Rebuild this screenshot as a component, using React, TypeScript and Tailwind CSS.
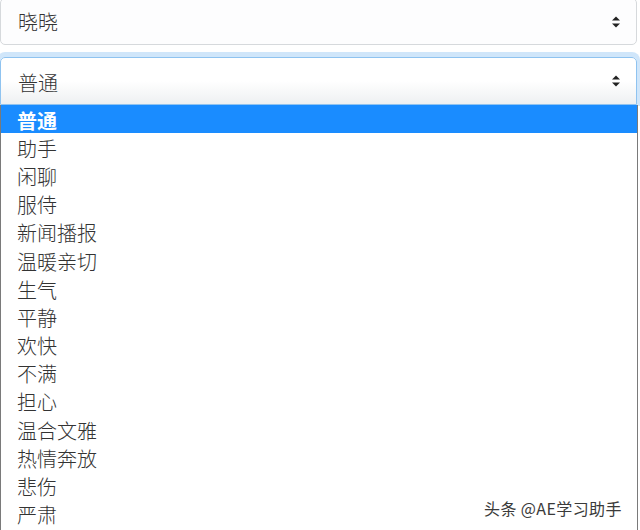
import React from 'react';

const options = [
  '普通',
  '助手',
  '闲聊',
  '服侍',
  '新闻播报',
  '温暖亲切',
  '生气',
  '平静',
  '欢快',
  '不满',
  '担心',
  '温合文雅',
  '热情奔放',
  '悲伤',
  '严肃',
];

function Arrows() {
  return (
    <svg width="10" height="14" viewBox="0 0 10 14" className="shrink-0">
      <polygon points="1,5.5 5,1.5 9,5.5" fill="#222" />
      <polygon points="1,8.5 5,12.5 9,8.5" fill="#222" />
    </svg>
  );
}

export default function App() {
  return (
    <div
      className="relative w-[640px] h-[530px] overflow-hidden bg-white text-[#333]"
      style={{ fontFamily: '"Noto Sans CJK SC", "Noto Sans", sans-serif' }}
    >
      {/* First select */}
      <div className="mt-[-2px] mr-[3px] h-[47px] flex items-center justify-between pl-[17px] pr-[15px] border border-[#d6d9dc] rounded-[5px] bg-[#fdfdfe]">
        <span className="text-[20px] leading-none font-light">晓晓</span>
        <Arrows />
      </div>

      {/* Focused select */}
      <div className="mt-[12px] mr-[3px] h-[48px] flex items-center justify-between pl-[17px] pr-[15px] border border-[#8fc3f0] rounded-t-[5px] bg-gradient-to-b from-white via-white to-[#eef0f2] shadow-[0_-2px_0_3px_rgba(150,200,245,0.45)]">
        <span className="pt-[3px] text-[20px] leading-none font-light">普通</span>
        <Arrows />
      </div>

      {/* Open option list */}
      <div className="mr-[2px] h-[426px] border border-t-0 border-[#7a7a7a] bg-white">
        {options.map((opt, i) => (
          <div
            key={opt}
            className={
              i === 0
                ? 'h-[28.2px] flex items-center pt-[3px] pl-[16px] text-[20px] leading-none bg-[#1a8cff] text-white font-bold'
                : 'h-[28.2px] flex items-center pt-[3px] pl-[16px] text-[20px] leading-none font-light text-[#333]'
            }
          >
            {opt}
          </div>
        ))}
      </div>

      {/* Watermark */}
      <div className="absolute left-[484px] top-[498px] text-[16px] leading-[20px] tracking-[0.4px] text-[#3a3a3a] [text-shadow:0_0_2px_#fff]">
        头条 @AE学习助手
      </div>
    </div>
  );
}
